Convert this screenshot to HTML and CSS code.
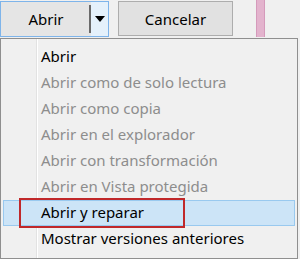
FILE: index.html
```html
<!DOCTYPE html>
<html lang="es">
<head>
<meta charset="utf-8">
<link rel="stylesheet" href="styles.css">
</head>
<body>
<div class="bar">
  <div class="split">
    <span class="main">Abrir</span>
    <span class="sep"></span>
    <span class="drop"><svg width="10" height="6" viewBox="0 0 10 6"><path d="M0 0H10L5 6Z" fill="#000"/></svg></span>
  </div>
  <div class="btn">Cancelar</div>
  <div class="pink"></div>
</div>
<div class="menu">
  <div class="item">Abrir</div>
  <div class="item dis">Abrir como de solo lectura</div>
  <div class="item dis">Abrir como copia</div>
  <div class="item dis">Abrir en el explorador</div>
  <div class="item dis">Abrir con transformación</div>
  <div class="item dis">Abrir en Vista protegida</div>
  <div class="item hl"><span class="mark">Abrir y reparar</span></div>
  <div class="item">Mostrar versiones anteriores</div>
</div>
</body>
</html>
```
FILE: styles.css
```css
* { box-sizing: border-box; }
html, body { margin: 0; padding: 0; }
body {
  width: 300px;
  height: 259px;
  background: #f0f0f0;
  font-family: "Noto Sans", "Open Sans", sans-serif;
  font-size: 15px;
  color: #000;
  overflow: hidden;
}
.bar {
  height: 38px;
  display: flex;
  align-items: flex-start;
  padding-top: 1px;
}
.split {
  width: 109px;
  height: 36px;
  border: 1px solid #7eb4ea;
  display: flex;
  align-items: stretch;
  background: #e5e5e5;
}
.main {
  width: 88px;
  display: flex;
  align-items: center;
  justify-content: center;
  padding-left: 2px;
}
.sep {
  width: 2px;
  margin: 3px 0;
  background: #6a6a6a;
}
.drop {
  flex: 1;
  background: #e5f1fb;
  display: flex;
  align-items: center;
  justify-content: center;
  padding-bottom: 1px;
}
.btn {
  margin-left: 9px;
  width: 115px;
  height: 35px;
  border: 1px solid #adadad;
  background: #e1e1e1;
  display: flex;
  align-items: center;
  justify-content: center;
}
.pink {
  margin-left: 23px;
  width: 9px;
  height: 37px;
  margin-top: -1px;
  background: #e3b3cd;
  border-left: 1px solid #d59abb;
  border-right: 1px solid #d59abb;
}
.menu {
  height: 221px;
  width: 298px;
  border: 1px solid #8f8f8f;
  background: #f0f0f0 linear-gradient(to right, transparent 35px, #e2e2e2 35px, #e2e2e2 36px, #fff 36px, #fff 37px, transparent 37px);
  padding: 4px 2px 0 2px;
}
.item {
  height: 26.1px;
  display: flex;
  align-items: center;
  padding-left: 38px;
  line-height: 1;
}
.dis { color: #8d8d8d; }
.hl {
  background: #cce4f7;
  border: 1px solid #99c9ef;
  padding-left: 37px;
}
.mark { position: relative; }
.mark::before {
  content: "";
  position: absolute;
  left: -22px;
  right: -41px;
  top: -7px;
  bottom: -8px;
  border: 2px solid #c0282a;
}
```
